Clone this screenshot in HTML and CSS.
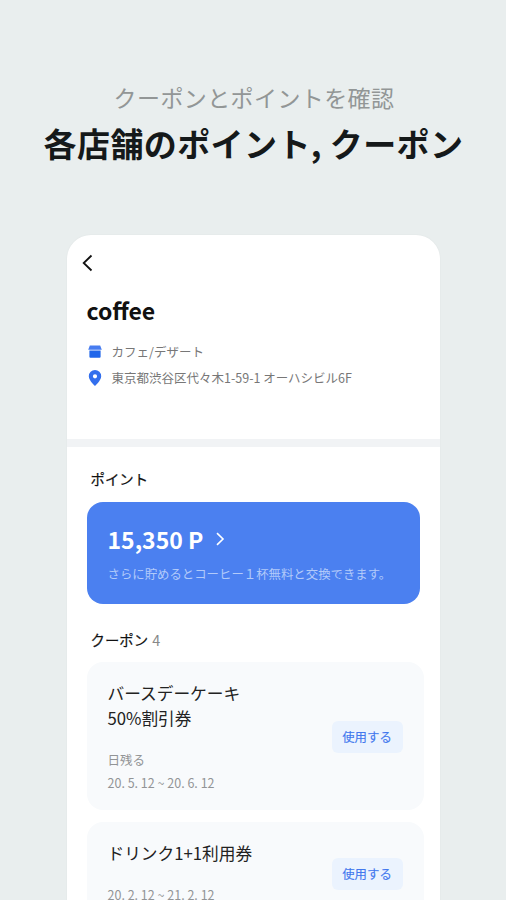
FILE: index.html
```html
<!DOCTYPE html>
<html lang="ja">
<head>
    <meta charset="UTF-8">
    <meta name="viewport" content="width=device-width, initial-scale=1.0">
    <title>各店舗のポイント, クーポン</title>
    <link rel="stylesheet" href="styles.css">
</head>
<body>
    <!-- Heading -->
    <header class="intro">
        <p class="intro-sub">クーポンとポイントを確認</p>
        <h1 class="intro-title">各店舗のポイント, クーポン</h1>
    </header>

    <!-- App screen -->
    <main class="screen">
        <section class="shop">
            <svg class="back-icon" width="12" height="18" viewBox="0 0 12 18">
                <path d="M10.5 1.5L2.7 9L10.5 16.5" fill="none" stroke="#111" stroke-width="1.8"/>
            </svg>
            <h2 class="shop-name">coffee</h2>
            <div class="shop-info">
                <svg class="info-icon" width="16" height="16" viewBox="0 0 16 16">
                    <path d="M2.8 1.5h10.4l1.6 4.2H1.2z" fill="#477cf0"/>
                    <path d="M2.4 6.6h11.2v6.2a1 1 0 0 1-1 1H3.4a1 1 0 0 1-1-1z" fill="#1f66ea"/>
                </svg>
                <span>カフェ/デザート</span>
            </div>
            <div class="shop-info">
                <svg class="info-icon" width="16" height="16" viewBox="0 0 16 16">
                    <path fill-rule="evenodd" d="M8 0a6.2 6.2 0 0 0-6.2 6.2C1.8 10.5 8 16 8 16s6.2-5.5 6.2-9.8A6.2 6.2 0 0 0 8 0zm0 4.2a2.1 2.1 0 1 1 0 4.2 2.1 2.1 0 0 1 0-4.2z" fill="#336fed"/>
                </svg>
                <span>東京都渋谷区代々木1-59-1 オーハシビル6F</span>
            </div>
        </section>

        <section class="wallet">
            <h3 class="section-title">ポイント</h3>
            <div class="point-card">
                <div class="point-value">
                    <span>15,350 P</span>
                    <svg width="10" height="14" viewBox="0 0 10 14">
                        <path d="M2 1.2L8 7L2 12.8" fill="none" stroke="#fff" stroke-width="1.6"/>
                    </svg>
                </div>
                <p class="point-text">さらに貯めるとコーヒー１杯無料と交換できます。</p>
            </div>

            <h3 class="section-title coupon-title">クーポン <span class="count">4</span></h3>
            <div class="coupon">
                <div class="coupon-body">
                    <p class="coupon-name">バースデーケーキ<br>50%割引券</p>
                    <p class="coupon-date">日残る<br>20. 5. 12 ~ 20. 6. 12</p>
                </div>
                <button class="use-button">使用する</button>
            </div>
            <div class="coupon">
                <div class="coupon-body">
                    <p class="coupon-name">ドリンク1+1利用券</p>
                    <p class="coupon-date">20. 2. 12 ~ 21. 2. 12</p>
                </div>
                <button class="use-button">使用する</button>
            </div>
        </section>
    </main>
</body>
</html>
```
FILE: styles.css
```css
* {
    box-sizing: border-box;
}

body {
    margin: 0;
    height: 900px;
    overflow: hidden;
    display: flex;
    flex-direction: column;
    align-items: center;
    background: #e9eeee;
    font-family: "Noto Sans CJK JP", sans-serif;
    color: #111;
}

h1, h2, h3, p {
    margin: 0;
}

/* Heading */
.intro {
    height: 235px;
    flex-shrink: 0;
    padding-top: 81px;
    text-align: center;
    white-space: nowrap;
}

.intro-sub {
    padding-left: 2px;
    font-size: 23px;
    line-height: 32px;
    letter-spacing: 0.4px;
    color: #929696;
}

.intro-title {
    margin-top: 6px;
    padding-left: 1px;
    font-size: 33px;
    line-height: 48px;
    letter-spacing: 0.4px;
    font-weight: 700;
    color: #15191a;
}

/* App screen */
.screen {
    width: 373px;
    height: 690px;
    flex-shrink: 0;
    border-radius: 24px 24px 0 0;
    background: #fff;
    overflow: hidden;
    box-shadow: 0 0 2px rgba(0, 0, 0, 0.05);
}

/* Shop */
.shop {
    height: 212px;
    padding: 19px 20px 0;
    border-bottom: 8px solid #f1f3f5;
}

.back-icon {
    display: block;
    margin-left: -6px;
}

.shop-name {
    margin: 20px 0 14px;
    font-size: 23px;
    line-height: 36px;
    font-weight: 700;
}

.shop-info {
    display: flex;
    align-items: center;
    height: 20px;
    margin-bottom: 6px;
    font-size: 12.5px;
    line-height: 18px;
    color: #777;
    white-space: nowrap;
}

.info-icon {
    margin-right: 9px;
}

/* Points */
.wallet {
    padding: 22px 16px 0 20px;
}

.section-title {
    padding-left: 4px;
    font-size: 14.4px;
    line-height: 20px;
    font-weight: 400;
    -webkit-text-stroke: 0.2px #111;
}

.point-card {
    width: 333px;
    height: 102px;
    margin-top: 13px;
    padding: 20px 21px 0;
    border-radius: 16px;
    background: #4b80f0;
    color: #fff;
}

.point-value {
    display: flex;
    align-items: center;
    gap: 12px;
    font-size: 23px;
    line-height: 34px;
    font-weight: 700;
}

.point-text {
    margin-top: 8px;
    font-size: 12.4px;
    line-height: 20px;
    color: #b2cafa;
    white-space: nowrap;
}

/* Coupons */
.coupon-title {
    margin-top: 26px;
    margin-bottom: 12px;
}

.count {
    margin-left: 1px;
    color: #888;
    -webkit-text-stroke: 0;
}

.coupon {
    display: flex;
    justify-content: space-between;
    align-items: center;
    height: 148px;
    margin-bottom: 12px;
    padding: 18px 21px 16px;
    border-radius: 16px;
    background: #f8fafc;
}

.coupon:last-child {
    height: 101px;
}

.coupon-name {
    font-size: 16.7px;
    line-height: 25px;
    color: #222;
}

.coupon-date {
    margin-top: 17px;
    font-size: 12.5px;
    line-height: 23px;
    color: #929496;
}

.use-button {
    width: 71px;
    height: 32px;
    padding: 0;
    border: none;
    border-radius: 6px;
    background: #ebf3fe;
    font-family: inherit;
    font-size: 12.4px;
    font-weight: 400;
    color: #4278ee;
    -webkit-text-stroke: 0.15px #4278ee;
}
```
